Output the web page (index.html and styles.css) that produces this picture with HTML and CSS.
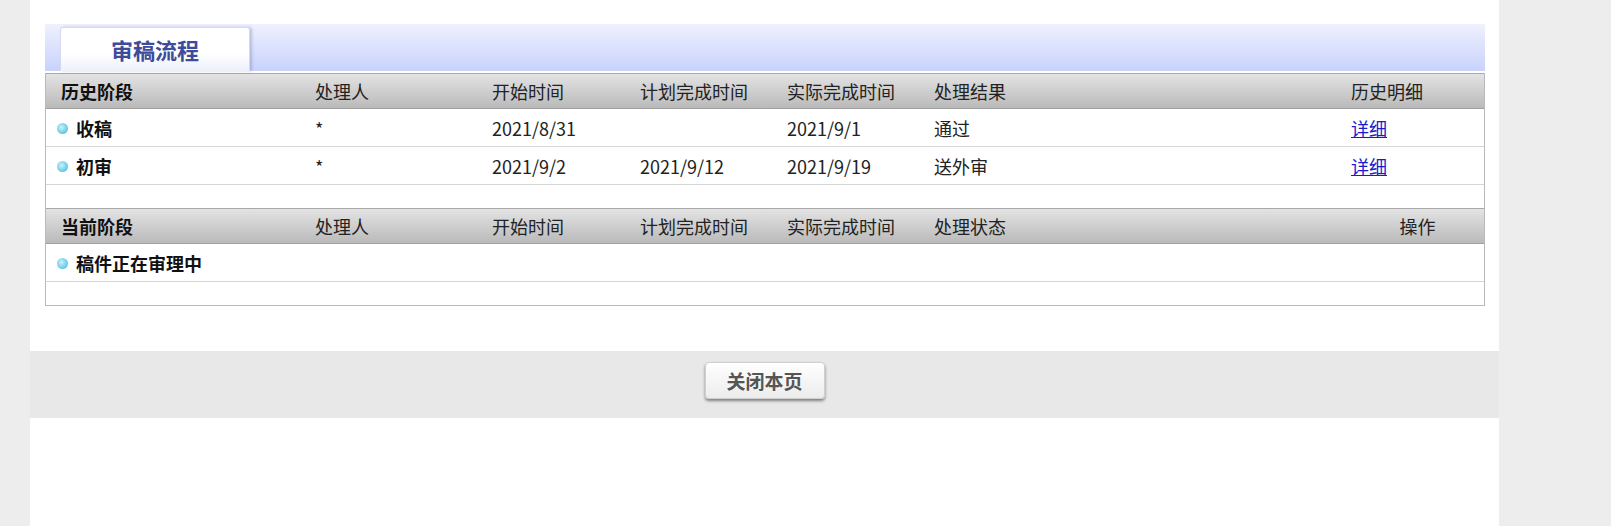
FILE: index.html
```html
<!DOCTYPE html>
<html lang="zh-CN">
<head>
    <meta charset="UTF-8">
    <title>审稿流程</title>
    <link rel="stylesheet" href="styles.css">
</head>
<body>
    <div class="page">
        <div class="panel">
            <div class="panel-head">
                <div class="tab">审稿流程</div>
            </div>

            <table class="flow">
                <colgroup>
                    <col class="c-stage">
                    <col class="c-user">
                    <col class="c-date">
                    <col class="c-date2">
                    <col class="c-date2">
                    <col class="c-result">
                    <col class="c-op">
                </colgroup>
                <tr class="head">
                    <th class="stage">历史阶段</th>
                    <th>处理人</th>
                    <th>开始时间</th>
                    <th>计划完成时间</th>
                    <th>实际完成时间</th>
                    <th>处理结果</th>
                    <th>历史明细</th>
                </tr>
                <tr class="row">
                    <td class="stage"><span class="dot"></span>收稿</td>
                    <td>*</td>
                    <td>2021/8/31</td>
                    <td></td>
                    <td>2021/9/1</td>
                    <td>通过</td>
                    <td><a href="#">详细</a></td>
                </tr>
                <tr class="row">
                    <td class="stage"><span class="dot"></span>初审</td>
                    <td>*</td>
                    <td>2021/9/2</td>
                    <td>2021/9/12</td>
                    <td>2021/9/19</td>
                    <td>送外审</td>
                    <td><a href="#">详细</a></td>
                </tr>
                <tr class="blank"><td colspan="7"></td></tr>

                <tr class="head">
                    <th class="stage">当前阶段</th>
                    <th>处理人</th>
                    <th>开始时间</th>
                    <th>计划完成时间</th>
                    <th>实际完成时间</th>
                    <th>处理状态</th>
                    <th class="center">操作</th>
                </tr>
                <tr class="row">
                    <td class="stage"><span class="dot"></span>稿件正在审理中</td>
                    <td></td>
                    <td></td>
                    <td></td>
                    <td></td>
                    <td></td>
                    <td></td>
                </tr>
                <tr class="blank last"><td colspan="7"></td></tr>
            </table>
        </div>

        <div class="footer">
            <button type="button" class="close-btn">关闭本页</button>
        </div>
    </div>
</body>
</html>
```

FILE: styles.css
```css
html, body {
    margin: 0;
    padding: 0;
}

body {
    background: #ededed;
    font-family: "Noto Sans CJK SC", "Noto Sans", sans-serif;
    color: #222;
}

.page {
    margin-left: 30px;
    width: 1469px;
    min-height: 526px;
    background: #fff;
    padding-top: 24px;
    box-sizing: border-box;
}

.panel {
    margin: 0 14px 0 15px;
}

.panel-head {
    height: 47px;
    background: linear-gradient(#eff1fe, #c8d2fc);
    padding-left: 15px;
    display: flex;
    align-items: flex-end;
}

.tab {
    width: 190px;
    height: 44px;
    box-sizing: border-box;
    border: 1px solid #d6daee;
    border-bottom: none;
    border-radius: 3px 3px 0 0;
    background: linear-gradient(#ffffff 60%, #eef0fb);
    box-shadow: 2px 0 3px rgba(60, 70, 120, 0.25);
    color: #3d4b9c;
    font-size: 22px;
    font-weight: bold;
    line-height: 42px;
    text-align: center;
}

.flow {
    width: 100%;
    margin-top: 2px;
    border-collapse: separate;
    border-spacing: 0;
    table-layout: fixed;
    border: 1px solid #b9b9b9;
    border-top: none;
    font-size: 18px;
}

.c-stage { width: 269px; }
.c-user { width: 177px; }
.c-date { width: 148px; }
.c-date2 { width: 147px; }
.c-result { width: 417px; }
.c-op { width: 133px; }

.flow th,
.flow td {
    padding: 0;
    text-align: left;
    white-space: nowrap;
    box-sizing: border-box;
}

.head th {
    height: 36px;
    border-top: 1px solid #a8a8a8;
    border-bottom: 1px solid #a0a0a0;
    background: linear-gradient(#e3e3e3, #bababa);
    font-weight: normal;
    color: #222;
}

.head th.stage {
    padding-left: 15px;
    font-weight: bold;
    color: #111;
}

.head th.center {
    text-align: center;
}

.row td {
    height: 38px;
    border-bottom: 1px solid #d6d6d6;
}

.row td.stage {
    padding-left: 11px;
    font-weight: bold;
    color: #111;
}

.dot {
    display: inline-block;
    width: 11px;
    height: 11px;
    margin-right: 8px;
    border-radius: 50%;
    background: radial-gradient(circle at 40% 40%, #c8f2fc, #62c6e6 70%, #4bb2d8);
    vertical-align: 2px;
}

.row a {
    color: #1a1ad0;
    text-decoration: underline;
}

.blank td {
    height: 23px;
}

.footer {
    margin-top: 45px;
    height: 67px;
    background: #e8e8e8;
    display: flex;
    align-items: flex-start;
    justify-content: center;
    padding-top: 11px;
    box-sizing: border-box;
}

.close-btn {
    width: 120px;
    height: 37px;
    border: 1px solid #cfcfcf;
    border-radius: 4px;
    background: linear-gradient(#ffffff, #ececec);
    box-shadow: 0 2px 3px rgba(0, 0, 0, 0.45);
    font-family: "Noto Sans CJK SC", sans-serif;
    font-size: 19px;
    font-weight: bold;
    color: #555;
    cursor: pointer;
}
```
